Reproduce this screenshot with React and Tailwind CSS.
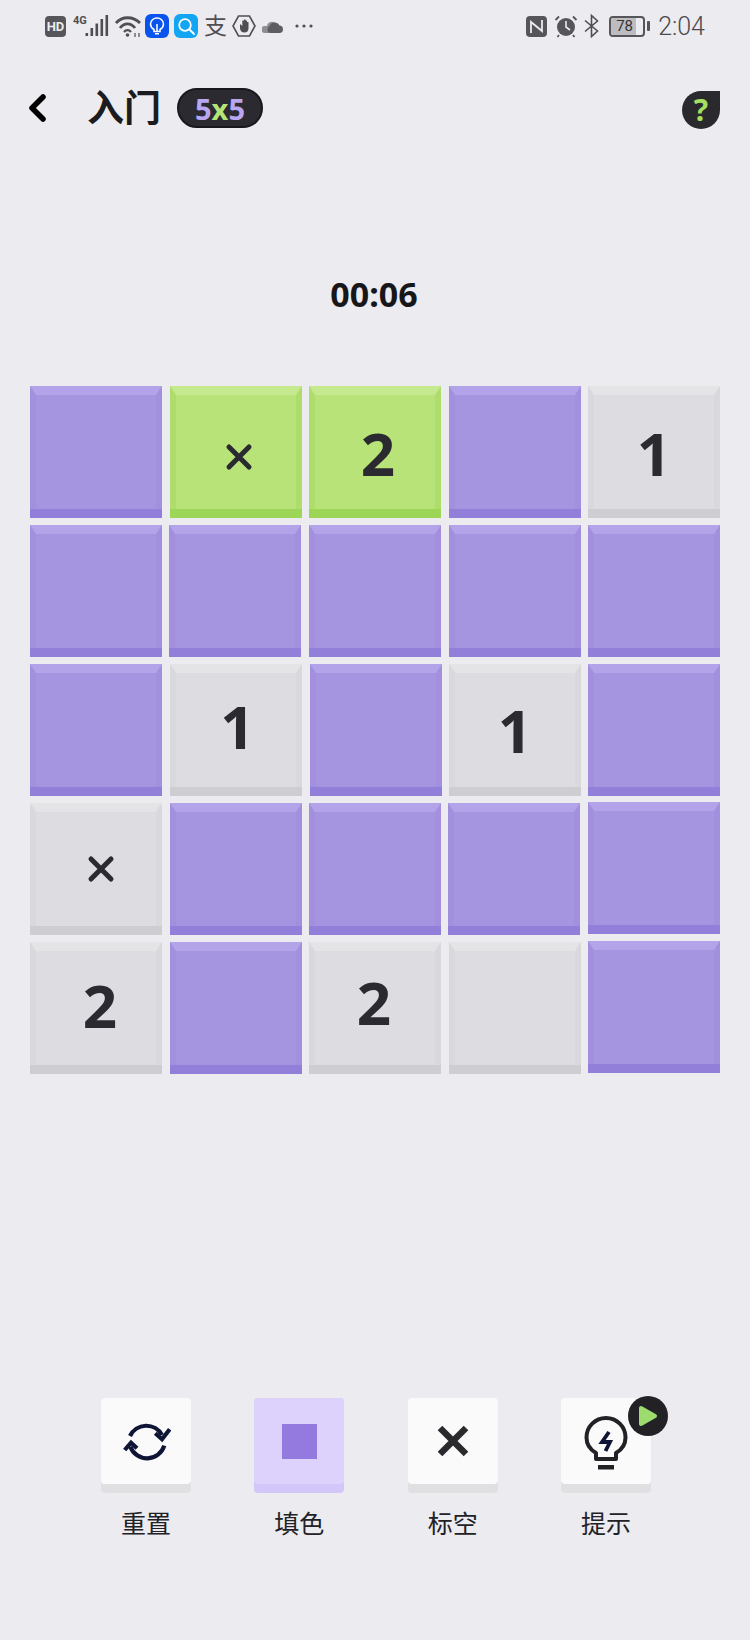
const CELL_STYLES = {
  p: { base: "bg-[#927fd9]", face: "bg-[#a594e0] border-t-[#b3a3e8] border-x-[#a290de]" },
  g: { base: "bg-[#9dd657]", face: "bg-[#b8e378] border-t-[#c5e98e] border-x-[#aedd6b]" },
  w: { base: "bg-[#cdcdd2]", face: "bg-[#dcdce1] border-t-[#e4e4e7] border-x-[#d8d8dd]" },
};

// s = the 1px drift some tiles have in the reference, c = where the mark sits in the tile
const BOARD = [
  [{ t: "p" }, { t: "g", x: true, c: "ml-[6px] mt-[10px]" }, { t: "g", n: "2", c: "ml-[6px] mt-[2px]" }, { t: "p" }, { t: "w", n: "1", c: "mt-[2px]" }],
  [{ t: "p" }, { t: "p", s: "-ml-px" }, { t: "p" }, { t: "p" }, { t: "p" }],
  [{ t: "p" }, { t: "w", n: "1", c: "ml-[4px] mt-[-8px]" }, { t: "p", s: "ml-px" }, { t: "w", n: "1", c: "ml-[1px]" }, { t: "p" }],
  [{ t: "w", x: true, c: "ml-[9px]" }, { t: "p" }, { t: "p" }, { t: "p", s: "-ml-px" }, { t: "p", s: "-mt-px" }],
  [{ t: "w", n: "2", c: "ml-[8px] mt-[-6px]" }, { t: "p" }, { t: "w", n: "2", c: "mr-[2px] mt-[-12px]" }, { t: "w" }, { t: "p", s: "-mt-px" }],
];

function CrossMark() {
  return (
    <svg width="28" height="28" viewBox="0 0 28 28" fill="none">
      <path d="M4 4 L24 24 M24 4 L4 24" stroke="#2a2a30" strokeWidth="5" strokeLinecap="round" />
    </svg>
  );
}

function Cell({ t, n, x, c, s }) {
  const st = CELL_STYLES[t];
  return (
    <div className={`w-[132px] h-[132px] pb-[9px] ${st.base} ${s || ""}`}>
      <div className={`h-full border-t-[9px] border-x-[6px] border-b-0 border-solid flex items-center justify-center ${st.face}`}>
        {n && <span className={`text-[60px] leading-none font-bold font-['Noto_Sans',sans-serif] text-[#2a2a30] ${c || ""}`}>{n}</span>}
        {x && <span className={`flex ${c || ""}`}><CrossMark /></span>}
      </div>
    </div>
  );
}

function StatusBar() {
  return (
    <div className="h-[52px] pl-[45px] pr-[45px] flex items-center justify-between text-[#4f4f53]">
      <div className="flex items-center">
        <div className="w-[21px] h-[21px] rounded-[4px] bg-[#55555a] text-[#ecebf0] text-[13px] leading-[21px] font-bold text-center font-['Roboto',sans-serif]">HD</div>
        <svg width="36" height="24" viewBox="0 0 36 24" className="ml-[7px]" fill="#4f4f53">
          <text x="0" y="10" fontSize="11" fontWeight="700" fontFamily="Roboto, sans-serif">4G</text>
          <rect x="12.5" y="19" width="2.6" height="3" />
          <rect x="17.5" y="14" width="2.6" height="8" />
          <rect x="22.5" y="9.5" width="2.6" height="12.5" />
          <rect x="27.5" y="5" width="2.6" height="17" />
          <rect x="32.5" y="1" width="2.6" height="21" />
        </svg>
        <svg width="26" height="24" viewBox="0 0 26 24" className="ml-[6px]" fill="none" stroke="#4f4f53" strokeWidth="2.8">
          <path d="M1 9 C7 2 18 2 25 9" />
          <path d="M5 14 C9 8.5 16 8.5 20 14" />
          <path d="M9 18 C11 15.5 14 15.5 16 18" strokeWidth="2.2" />
          <circle cx="12.5" cy="21" r="1.8" fill="#4f4f53" stroke="none" />
          <path d="M20 19 V23 M24 19 V23" strokeWidth="1.2" />
        </svg>
        <div className="w-[24px] h-[24px] ml-[4px] rounded-[6px] bg-[#0a54ee] flex items-center justify-center">
          <svg width="16" height="18" viewBox="0 0 16 18" fill="none" stroke="#ffffff" strokeWidth="1.5">
            <path d="M5 12.5 C2.5 11 1.5 9 1.5 7 C1.5 3.5 4.5 1 8 1 C11.5 1 14.5 3.5 14.5 7 C14.5 9 13.5 11 11 12.5 V14.5 H5 Z" />
            <path d="M8 14 V7 M6 16.8 H10" />
          </svg>
        </div>
        <div className="w-[24px] h-[24px] ml-[5px] rounded-[6px] bg-[#12a5f4] flex items-center justify-center">
          <svg width="18" height="18" viewBox="0 0 18 18" fill="none" stroke="#ffffff" strokeWidth="1.8">
            <circle cx="8" cy="8" r="5.8" />
            <path d="M12.5 12.5 L17 17" strokeLinecap="round" />
          </svg>
        </div>
        <span className="w-[24px] ml-[6px] mt-[-4px] text-[23px] leading-none text-[#4f4f53]">支</span>
        <svg width="24" height="24" viewBox="0 0 24 24" className="ml-[4px]" fill="none">
          <path d="M6.5 2 H17.5 L23 12 L17.5 22 H6.5 L1 12 Z" stroke="#4f4f53" strokeWidth="1.6" />
          <path d="M8 10 V14 C8 17 10 18.5 12.5 18.5 C15 18.5 16.5 17 16.5 14 V8 H15 V11 V6.5 H13.5 V11 V5.5 H12 V11 V6.5 H10.3 V12 L8 10 Z" fill="#4f4f53" />
        </svg>
        <svg width="22" height="16" viewBox="0 0 22 16" className="ml-[6px]">
          <path d="M3 15 A3.5 3.5 0 0 1 3 8 H5 A5 5 0 0 1 14 6 V15 Z" fill="#8e8e92" />
          <path d="M8 15 A3.8 3.8 0 0 1 7.5 8 A5.5 5.5 0 0 1 17.5 7.5 A3.8 3.8 0 0 1 18 15 Z" fill="#5e5e62" />
        </svg>
        <svg width="18" height="4" viewBox="0 0 18 4" className="ml-[11px]" fill="#4f4f53">
          <circle cx="2" cy="2" r="1.6" />
          <circle cx="9" cy="2" r="1.6" />
          <circle cx="16" cy="2" r="1.6" />
        </svg>
      </div>
      <div className="flex items-center">
        <svg width="21" height="21" viewBox="0 0 21 21">
          <rect width="21" height="21" rx="4" fill="#55555a" />
          <path d="M5 17 V6 L16 15 V4" fill="none" stroke="#ecebf0" strokeWidth="1.8" />
        </svg>
        <svg width="24" height="24" viewBox="0 0 24 24" className="ml-[7px]">
          <circle cx="12" cy="13" r="9" fill="#55555a" />
          <path d="M12 7 V13 L16 16" fill="none" stroke="#ecebf0" strokeWidth="1.6" />
          <path d="M1.5 6 L5 2.5 M22.5 6 L19 2.5 M5 21 L3.5 23 M19 21 L20.5 23" stroke="#55555a" strokeWidth="1.8" />
        </svg>
        <svg width="17" height="24" viewBox="0 0 16 24" className="ml-[5px]" fill="none" stroke="#4f4f53" strokeWidth="1.6">
          <path d="M1.5 6.5 L14 17 L8 22.5 V1.5 L14 7 L1.5 17.5" />
        </svg>
        <div className="relative w-[36px] h-[21px] ml-[9px] rounded-[4px] border-2 border-solid border-[#55555a] flex items-center overflow-hidden">
          <div className="h-full w-[25px] bg-[#bdbdc1]" />
          <span className="absolute left-[5px] top-0 text-[15px] leading-[17px] font-['Roboto',sans-serif] text-[#333336]">78</span>
        </div>
        <div className="w-[3px] h-[10px] ml-[2px] bg-[#55555a] rounded-[1px]" />
        <span className="ml-[8px] text-[25px] leading-none font-light font-['Roboto',sans-serif] text-[#4a4a4e]">2:04</span>
      </div>
    </div>
  );
}

function TopBar() {
  return (
    <div className="h-[40px] mt-[36px] pl-[27px] pr-[30px] flex items-center">
      <svg width="20" height="30" viewBox="0 0 20 30" fill="none">
        <path d="M16 4 L5 15 L16 26" stroke="#000000" strokeWidth="5.5" strokeLinecap="round" strokeLinejoin="round" />
      </svg>
      <span className="ml-[40px] mt-[-4px] text-[37px] leading-none font-bold text-[#1c1c20]">入门</span>
      <div className="ml-[16px] w-[86px] h-[40px] rounded-full bg-[#2a2a30] border-2 border-solid border-[#19191d] flex items-center justify-center text-[29px] leading-none font-bold font-['Noto_Sans',sans-serif]">
        <span className="text-[#b8a6f0]">5</span>
        <span className="text-[#b8e378]">x</span>
        <span className="text-[#b8a6f0]">5</span>
      </div>
      <div className="ml-auto w-[38px] h-[38px] mt-[4px] rounded-full rounded-tr-[4px] bg-[#2a2a2e] flex items-center justify-center text-[30px] leading-none font-bold font-['Noto_Sans',sans-serif] text-[#a5e05f]">?</div>
    </div>
  );
}

function RefreshIcon() {
  return (
    <svg width="48" height="44" viewBox="0 0 48 44" fill="none" stroke="#0f1535" strokeWidth="4.2" className="ml-[2px]">
      <path d="M7 17 A18 18 0 0 1 39 16" />
      <path d="M41.3 26.7 A18 18 0 0 1 7.3 27.7" />
      <path d="M32.3 14.3 L39 20.3 L46.7 10.3" />
      <path d="M14 29.3 L8 23.7 L1.7 31" />
    </svg>
  );
}

function BulbIcon() {
  return (
    <svg width="44" height="54" viewBox="0 0 44 54" fill="none" className="mt-[4px]">
      <path d="M12 43 V37 C6 33.5 2.5 28 2.5 21.5 C2.5 10.7 11.2 2 22 2 C32.8 2 41.5 10.7 41.5 21.5 C41.5 28 38 33.5 32 37 V43 Z" stroke="#222226" strokeWidth="4" strokeLinejoin="round" />
      <path d="M25 16 L18 26 H26 L21.5 35" stroke="#0f1535" strokeWidth="3.8" />
      <rect x="14" y="49" width="16" height="4.5" fill="#222226" />
    </svg>
  );
}

function ToolButton({ label, active, badge, children }) {
  return (
    <div className="flex flex-col items-center w-[90px]">
      <div className={`relative w-[90px] h-[95px] rounded-[4px] pb-[9px] ${active ? "bg-[#d3c6f8]" : "bg-[#e0e0e2]"}`}>
        <div className={`h-full rounded-[4px] flex items-center justify-center ${active ? "bg-[#dcd2fc]" : "bg-[#fafafa]"}`}>
          {children}
        </div>
        {badge && (
          <div className="absolute right-[-17px] top-[-2px] w-[40px] h-[40px] rounded-full bg-[#222226] flex items-center justify-center">
            <svg width="20" height="22" viewBox="0 0 20 22">
              <path d="M3 3 L17 11 L3 19 Z" fill="#9cdb6e" stroke="#9cdb6e" strokeWidth="4" strokeLinejoin="round" />
            </svg>
          </div>
        )}
      </div>
      <span className="mt-[15px] text-[25px] leading-[28px] text-[#222226]">{label}</span>
    </div>
  );
}

export default function App() {
  return (
    <div className="w-[750px] h-[1640px] overflow-hidden bg-[#ecebf0] font-['Noto_Sans_CJK_SC','Noto_Sans',sans-serif]">
      <StatusBar />
      <TopBar />
      <div className="mt-[146px] pr-[2px] text-center text-[34px] leading-[40px] font-bold font-['Noto_Sans',sans-serif] text-[#17171a]">00:06</div>
      <div className="mt-[72px] ml-[30px] grid grid-cols-[repeat(5,132px)] gap-x-[7.5px] gap-y-[7px]">
        {BOARD.flat().map((cell, i) => (
          <Cell key={i} {...cell} />
        ))}
      </div>
      <div className="mt-[324px] ml-[101px] flex gap-x-[63.33px]">
        <ToolButton label="重置"><RefreshIcon /></ToolButton>
        <ToolButton label="填色" active><div className="w-[35px] h-[35px] bg-[#9479de]" /></ToolButton>
        <ToolButton label="标空">
          <svg width="34" height="34" viewBox="0 0 34 34" fill="none">
            <path d="M4 4 L30 30 M30 4 L4 30" stroke="#2a2a2e" strokeWidth="6.5" />
          </svg>
        </ToolButton>
        <ToolButton label="提示" badge><BulbIcon /></ToolButton>
      </div>
    </div>
  );
}
